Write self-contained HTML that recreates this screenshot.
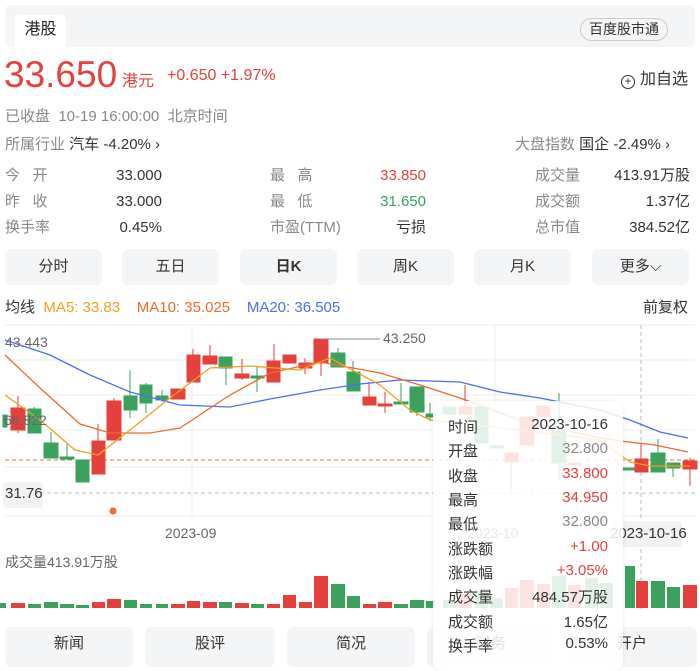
<!DOCTYPE html>
<html><head><meta charset="utf-8"><style>
*{margin:0;padding:0;box-sizing:border-box}
body{width:700px;height:661px;overflow:hidden;background:#fff;font-family:"Liberation Sans","Noto Sans CJK SC",sans-serif;color:#333;position:relative}
.a{position:absolute;white-space:nowrap}
.g{color:#888}
.r{color:#e5403b}
.gr{color:#3aa25d}
.btn{position:absolute;top:249px;height:36px;width:97px;background:#f4f5f7;border-radius:6px;font-size:15px;color:#333;text-align:center;line-height:36px}
.tab{position:absolute;top:627px;height:40px;background:#f4f5f7;border-radius:6px;font-size:15px;color:#333;text-align:center;line-height:34px}
.tt{position:absolute;left:433px;top:401px;width:190px;height:270px;background:rgba(255,255,255,0.86);border-radius:10px;box-shadow:0 0 6px rgba(0,0,0,0.08);font-size:15px}
.tt div{position:absolute;left:15px;right:15px;height:24px}
.tt span{position:absolute;right:0}
</style></head><body>
<div class="a" style="left:5px;top:5px;width:690px;height:42px;background:#f4f5f7;border-radius:6px"></div>
<div class="a" style="left:15px;top:15px;width:51px;height:32px;background:#fff;border-radius:6px 6px 0 0;font-size:16px;line-height:30px;text-align:center;color:#222">港股</div>
<div class="a" style="left:580px;top:18px;width:88px;height:23px;border:1px solid #ccc;border-radius:12px;font-size:14px;line-height:21px;text-align:center;color:#333">百度股市通</div>
<div class="a r" style="left:4px;top:55px;font-size:37px;line-height:40px">33.650</div>
<div class="a r" style="left:122px;top:67px;font-size:16px">港元</div>
<div class="a r" style="left:167px;top:67px;font-size:16px">+0.650 +1.97%</div>
<div class="a" style="left:621px;top:65px;font-size:16px;color:#333"><span style="display:inline-block;width:14px;height:14px;border:1.3px solid #333;border-radius:50%;font-size:12px;line-height:11px;text-align:center;vertical-align:-1px;margin-right:5px">+</span>加自选</div>
<div class="a g" style="left:5px;top:105px;font-size:15px">已收盘&nbsp; 10-19 16:00:00&nbsp; 北京时间</div>
<div class="a" style="left:5px;top:133px;font-size:15px"><span class="g">所属行业</span> 汽车 -4.20% ›</div>
<div class="a" style="left:515px;top:133px;font-size:15px"><span class="g">大盘指数</span> 国企 -2.49% ›</div>
<div class="a" style="left:0;top:163px;width:700px;font-size:15px;line-height:26px">
<div class="a g" style="left:5px;top:0">今&nbsp;&nbsp;&nbsp;开<br>昨&nbsp;&nbsp;&nbsp;收<br>换手率</div>
<div class="a" style="left:110px;top:0;width:52px;text-align:right">33.000<br>33.000<br>0.45%</div>
<div class="a g" style="left:270px;top:0">最&nbsp;&nbsp;&nbsp;高<br>最&nbsp;&nbsp;&nbsp;低<br>市盈(TTM)</div>
<div class="a" style="left:360px;top:0;width:66px;text-align:right"><span class="r">33.850</span><br><span class="gr">31.650</span><br>亏损</div>
<div class="a g" style="left:535px;top:0">成交量<br>成交额<br>总市值</div>
<div class="a" style="left:595px;top:0;width:95px;text-align:right">413.91万股<br>1.37亿<br>384.52亿</div>
</div>
<div class="btn" style="left:5px">分时</div>
<div class="btn" style="left:122px">五日</div>
<div class="btn" style="left:240px;font-weight:bold">日K</div>
<div class="btn" style="left:357px">周K</div>
<div class="btn" style="left:474px">月K</div>
<div class="btn" style="left:592px">更多⌵</div>
<div class="a" style="left:5px;top:296px;font-size:15px"><span style="color:#333">均线</span>&nbsp; <span style="color:#f2a01e">MA5: 33.83</span>&nbsp;&nbsp;&nbsp; <span style="color:#f06a2c">MA10: 35.025</span>&nbsp;&nbsp;&nbsp; <span style="color:#4a6ef5">MA20: 36.505</span></div>
<div class="a" style="left:643px;top:296px;font-size:15px;color:#333">前复权</div>
<svg class="a" style="left:0;top:0" width="700" height="661">
<g stroke="#eee" stroke-width="1">
<line x1="5" y1="325" x2="695" y2="325"/><line x1="5" y1="360" x2="695" y2="360"/><line x1="5" y1="395" x2="695" y2="395"/><line x1="5" y1="430" x2="695" y2="430"/><line x1="5" y1="467" x2="695" y2="467"/><line x1="5" y1="516" x2="695" y2="516"/>
<line x1="192" y1="325" x2="192" y2="516"/><line x1="495" y1="325" x2="495" y2="516"/>
</g>
<line x1="5" y1="493" x2="695" y2="493" stroke="#bbb" stroke-dasharray="4,3"/>
<line x1="5" y1="460" x2="695" y2="460" stroke="#f06a2c" stroke-dasharray="4,3"/>
<line x1="641" y1="325" x2="641" y2="610" stroke="#bbb" stroke-dasharray="4,3"/>
<g stroke-width="1">
<g fill="#e5403b" stroke="#e5403b">
<line x1="18" y1="396" x2="18" y2="433"/><rect x="11" y="408" width="14" height="22"/>
<line x1="98" y1="424" x2="98" y2="474"/><rect x="92" y="441" width="13" height="33"/>
<line x1="114" y1="398" x2="114" y2="440"/><rect x="107" y="401" width="14" height="39"/>
<rect x="171" y="389" width="14" height="10"/>
<line x1="193" y1="349" x2="193" y2="382"/><rect x="187" y="355" width="13" height="27"/>
<line x1="210" y1="345" x2="210" y2="364"/><rect x="203" y="356" width="14" height="8"/>
<line x1="242" y1="359" x2="242" y2="380"/><rect x="235" y="374" width="14" height="4"/>
<line x1="274" y1="344" x2="274" y2="382"/><rect x="267" y="361" width="13" height="21"/>
<rect x="283" y="355" width="13" height="8"/>
<line x1="305" y1="358" x2="305" y2="374"/><rect x="299" y="363" width="13" height="5"/>
<line x1="321" y1="339" x2="321" y2="376"/><rect x="314" y="339" width="14" height="24"/>
<line x1="369" y1="382" x2="369" y2="405"/><rect x="363" y="397" width="13" height="8"/>
<line x1="385" y1="392" x2="385" y2="413"/><rect x="378" y="404" width="14" height="2"/>
<line x1="465" y1="385" x2="465" y2="415"/><rect x="459" y="407" width="13" height="7"/>
<line x1="511" y1="453" x2="511" y2="490"/><rect x="505" y="453" width="13" height="9"/>
<rect x="520" y="417" width="14" height="28"/>
<rect x="537" y="406" width="13" height="11"/>
<rect x="568" y="463" width="13" height="2"/>
<line x1="641" y1="443" x2="641" y2="472"/><rect x="635" y="459" width="13" height="13"/>
<line x1="690" y1="458" x2="690" y2="486"/><rect x="683" y="461" width="14" height="8"/>
</g>
<g fill="#3aa25d" stroke="#3aa25d">
<rect x="3" y="415" width="4" height="12"/>
<line x1="34" y1="407" x2="34" y2="433"/><rect x="28" y="409" width="13" height="24"/>
<line x1="51" y1="432" x2="51" y2="458"/><rect x="44" y="443" width="14" height="15"/>
<line x1="67" y1="444" x2="67" y2="460"/><rect x="60" y="457" width="14" height="2"/>
<rect x="76" y="460" width="13" height="22"/>
<line x1="130" y1="370" x2="130" y2="418"/><rect x="124" y="396" width="13" height="14"/>
<line x1="146" y1="383" x2="146" y2="413"/><rect x="140" y="385" width="12" height="18"/>
<line x1="162" y1="390" x2="162" y2="402"/><rect x="156" y="396" width="12" height="4"/>
<line x1="226" y1="357" x2="226" y2="385"/><rect x="219" y="357" width="13" height="11"/>
<line x1="257" y1="367" x2="257" y2="392"/><rect x="251" y="376" width="13" height="2"/>
<line x1="338" y1="348" x2="338" y2="367"/><rect x="331" y="353" width="14" height="14"/>
<line x1="353" y1="361" x2="353" y2="391"/><rect x="347" y="372" width="13" height="19"/>
<line x1="401" y1="383" x2="401" y2="404"/><rect x="394" y="402" width="14" height="2"/>
<line x1="417" y1="387" x2="417" y2="416"/><rect x="410" y="387" width="14" height="25"/>
<line x1="430" y1="403" x2="430" y2="421"/><rect x="426" y="414" width="9" height="3"/>
<rect x="443" y="407" width="13" height="7"/>
<rect x="475" y="407" width="13" height="36"/>
<rect x="490" y="446" width="13" height="2"/>
<line x1="559" y1="393" x2="559" y2="480"/><rect x="552" y="430" width="14" height="33"/>
<rect x="585" y="468" width="13" height="2"/>
<line x1="658" y1="439" x2="658" y2="472"/><rect x="651" y="453" width="14" height="19"/>
<line x1="673" y1="463" x2="673" y2="477"/><rect x="667" y="463" width="13" height="5"/>
<rect x="622" y="468" width="12" height="2"/>
</g>
</g>
<polyline fill="none" stroke="#4a6ef5" stroke-width="1.3" points="5,340 50,355 90,375 130,392 180,405 230,407 270,399 320,390 360,384 400,380 460,382 500,392 540,398 600,410 630,420 660,432 688,438"/>
<polyline fill="none" stroke="#f06a2c" stroke-width="1.3" points="5,355 40,388 80,424 110,433 150,433 180,428 230,395 270,373 320,362 380,373 420,385 460,398 520,420 600,438 620,441 655,445 688,452"/>
<polyline fill="none" stroke="#f2a01e" stroke-width="1.3" points="5,395 40,420 75,450 98,455 130,430 170,398 210,368 250,366 300,370 330,358 380,385 410,410 430,420 520,430 600,440 630,462 650,466 690,466"/>
<line x1="320" y1="339" x2="380" y2="339" stroke="#888"/>
<circle cx="113" cy="511" r="3.5" fill="#f06a2c"/>
<g>
<rect x="0" y="603" width="6" height="5" fill="#3aa25d"/>
<rect x="11" y="603" width="14" height="5" fill="#e5403b"/><rect x="28" y="604" width="13" height="4" fill="#3aa25d"/><rect x="44" y="602" width="14" height="6" fill="#3aa25d"/><rect x="60" y="604" width="14" height="4" fill="#3aa25d"/><rect x="76" y="605" width="13" height="3" fill="#3aa25d"/><rect x="92" y="602" width="13" height="6" fill="#e5403b"/><rect x="107" y="599" width="14" height="9" fill="#e5403b"/><rect x="124" y="600" width="13" height="8" fill="#3aa25d"/><rect x="140" y="604" width="12" height="4" fill="#3aa25d"/><rect x="156" y="604" width="12" height="4" fill="#3aa25d"/><rect x="171" y="604" width="14" height="4" fill="#e5403b"/><rect x="187" y="601" width="13" height="7" fill="#e5403b"/><rect x="203" y="602" width="14" height="6" fill="#e5403b"/><rect x="219" y="602" width="13" height="6" fill="#3aa25d"/><rect x="235" y="603" width="14" height="5" fill="#e5403b"/><rect x="251" y="604" width="13" height="4" fill="#3aa25d"/><rect x="267" y="604" width="13" height="4" fill="#e5403b"/><rect x="283" y="595" width="13" height="13" fill="#e5403b"/><rect x="299" y="602" width="13" height="6" fill="#e5403b"/><rect x="314" y="576" width="14" height="32" fill="#e5403b"/><rect x="331" y="584" width="14" height="24" fill="#3aa25d"/><rect x="347" y="596" width="13" height="12" fill="#3aa25d"/><rect x="363" y="604" width="13" height="4" fill="#e5403b"/><rect x="378" y="602" width="14" height="6" fill="#e5403b"/><rect x="394" y="604" width="14" height="4" fill="#3aa25d"/><rect x="410" y="600" width="14" height="8" fill="#3aa25d"/><rect x="426" y="601" width="9" height="7" fill="#3aa25d"/>
<rect x="443" y="600" width="13" height="8" fill="#3aa25d"/><rect x="459" y="594" width="13" height="14" fill="#e5403b"/><rect x="475" y="590" width="13" height="18" fill="#3aa25d"/><rect x="490" y="598" width="13" height="10" fill="#3aa25d"/><rect x="505" y="588" width="13" height="20" fill="#e5403b"/><rect x="520" y="580" width="14" height="28" fill="#e5403b"/><rect x="537" y="584" width="13" height="24" fill="#e5403b"/><rect x="552" y="576" width="14" height="32" fill="#3aa25d"/><rect x="568" y="585" width="13" height="23" fill="#e5403b"/><rect x="585" y="578" width="13" height="30" fill="#3aa25d"/><rect x="600" y="583" width="13" height="25" fill="#3aa25d"/>
<rect x="625" y="566" width="10" height="42" fill="#3aa25d"/><rect x="636" y="581" width="12" height="27" fill="#e5403b"/><rect x="651" y="581" width="14" height="27" fill="#3aa25d"/><rect x="667" y="587" width="13" height="21" fill="#3aa25d"/><rect x="683" y="585" width="14" height="23" fill="#e5403b"/>
</g>
</svg>
<div class="a" style="left:5px;top:334px;font-size:14px;color:#666">43.443</div>
<div class="a" style="left:383px;top:330px;font-size:14px;color:#666">43.250</div>
<div class="a" style="left:4px;top:412px;font-size:14px;color:#666">66.822</div>
<div class="a" style="left:3px;top:482px;width:40px;height:26px;background:#f2f2f2;border-radius:4px;font-size:15px;line-height:24px;color:#333;padding-left:2px">31.76</div>
<div class="a" style="left:165px;top:525px;font-size:14px;color:#666">2023-09</div>
<div class="a" style="left:467px;top:525px;font-size:14px;color:#666">2023-10</div>
<div class="a" style="left:610px;top:521px;width:72px;height:26px;background:#f2f2f2;border-radius:4px;font-size:15px;line-height:26px;color:#333;text-align:right;padding-right:3px">2023-10-16</div>
<div class="a" style="left:5px;top:552px;font-size:14px;color:#666">成交量413.91万股</div>
<div class="tab" style="left:5px;width:128px">新闻</div>
<div class="tab" style="left:145px;width:130px">股评</div>
<div class="tab" style="left:287px;width:128px">简况</div>
<div class="tab" style="left:427px;width:128px">财务</div>
<div class="tab" style="left:567px;width:130px">开户</div>
<div class="tt">
<div style="top:15px">时间<span style="color:#333">2023-10-16</span></div>
<div style="top:39px">开盘<span class="g">32.800</span></div>
<div style="top:64px">收盘<span class="r">33.800</span></div>
<div style="top:88px">最高<span class="r">34.950</span></div>
<div style="top:112px">最低<span class="g">32.800</span></div>
<div style="top:137px">涨跌额<span class="r">+1.00</span></div>
<div style="top:161px">涨跌幅<span class="r">+3.05%</span></div>
<div style="top:185px">成交量<span style="color:#333">484.57万股</span></div>
<div style="top:210px">成交额<span style="color:#333">1.65亿</span></div>
<div style="top:234px">换手率<span style="color:#333">0.53%</span></div>
</div>
</body></html>
